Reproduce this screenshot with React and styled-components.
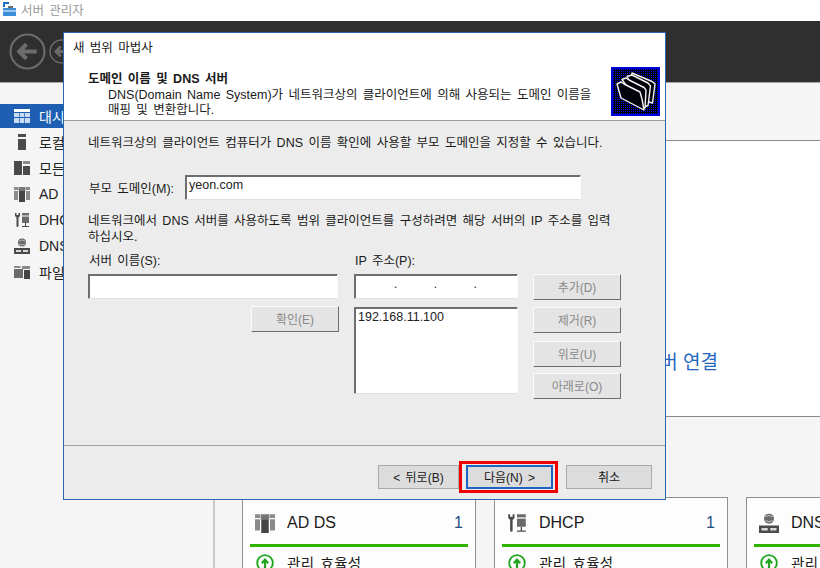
import styled, { createGlobalStyle } from 'styled-components';

const GlobalStyle = createGlobalStyle`
  html, body {
    margin: 0;
    padding: 0;
    overflow: hidden;
  }
  body {
    font-family: "Liberation Sans", "Noto Sans CJK KR", sans-serif;
    font-size: 12.5px;
    word-spacing: 1.9px;
    color: #1a1a1a;
  }
`;

const Page = styled.div`
  position: relative;
  width: 820px;
  height: 568px;
  overflow: hidden;
  background: #fff;
  display: flex;
  flex-direction: column;
`;

const TitleBar = styled.div`
  height: 21px;
  flex: none;
  box-sizing: border-box;
  display: flex;
  align-items: center;
  gap: 4px;
  padding: 0 0 3px 1px;
  color: #9a9a9a;
`;

const Toolbar = styled.div`
  height: 62px;
  flex: none;
  background: #2f2f2f;
  display: flex;
  align-items: center;
  gap: 3px;
  padding-left: 9px;
  border-bottom: 1px solid #a8a8a8;
  box-sizing: border-box;
`;

const Body = styled.div`
  flex: 1;
  display: flex;
  min-height: 0;
`;

const Sidebar = styled.nav`
  width: 213px;
  flex: none;
  background: #f5f5f5;
  border-right: 2px solid #c8c8c8;
  padding-top: 21px;
`;

const NavItem = styled.div`
  height: 24px;
  margin-bottom: 2px;
  display: flex;
  align-items: center;
  gap: 9px;
  padding-left: 14px;
  font-size: 14px;
  background: ${p => (p.$active ? '#1e5fb4' : 'transparent')};
  color: ${p => (p.$active ? '#fff' : '#222')};
`;

const Main = styled.div`
  flex: 1;
  min-width: 0;
  display: flex;
  flex-direction: column;
  background: #f5f5f5;
`;

const Banner = styled.div`
  height: 58px;
  flex: none;
  border-bottom: 1px solid #8c8c8c;
  box-sizing: border-box;
`;

const Content = styled.div`
  height: 276px;
  flex: none;
  box-sizing: border-box;
  background: #fff;
  border-bottom: 1px solid #8c8c8c;
  padding: 209px 102px 0 0;
  text-align: right;
  font-size: 19px;
  line-height: 26px;
  word-spacing: 0;
  color: #1f66c0;
`;

const CardRow = styled.div`
  flex: 1;
  display: flex;
  gap: 18px;
  padding: 80px 0 0 27px;
  overflow: hidden;
`;

const Card = styled.div`
  width: 234px;
  flex: none;
  height: 90px;
  box-sizing: border-box;
  background: #fdfdfd;
  border: 1px solid #8f8f8f;
  padding: 0 7px;
`;

const CardHead = styled.div`
  height: 43px;
  display: flex;
  align-items: center;
  gap: 12px;
  padding: 3px 5px 0;
  border-bottom: 3px solid #2db300;
  font-size: 16px;
  word-spacing: 0;
`;

const CardName = styled.span`
  flex: 1;
`;

const CardCount = styled.span`
  color: #1f4f80;
`;

const CardLine = styled.div`
  display: flex;
  align-items: center;
  gap: 13px;
  padding: 5px 0 0 6px;
  font-size: 14.5px;
  letter-spacing: 0.3px;
`;

const Dialog = styled.div`
  position: absolute;
  left: 63px;
  top: 32px;
  width: 603px;
  height: 468px;
  box-sizing: border-box;
  border: 1px solid #2a66b0;
  background: #ececec;
  display: flex;
  flex-direction: column;
`;

const DialogTitle = styled.div`
  height: 28px;
  flex: none;
  box-sizing: border-box;
  display: flex;
  align-items: center;
  padding: 0 0 2px 9px;
  background: #fff;
`;

const DialogHead = styled.div`
  height: 60px;
  flex: none;
  position: relative;
  background: #fff;
  border-bottom: 1px solid #a0a0a0;
  box-sizing: border-box;
  padding: 11px 0 0 24px;
  line-height: 15px;
`;

const HeadTitle = styled.div`
  font-weight: 700;
`;

const HeadText = styled.div`
  padding: 1px 0 0 20px;
`;

const Wizard = styled.div`
  position: absolute;
  right: 5px;
  top: 6px;
  width: 49px;
  height: 49px;
`;

const Form = styled.div`
  flex: 1;
  min-height: 0;
  padding: 14px 24px 0;
  display: flex;
  flex-direction: column;
`;

const Text = styled.div`
  line-height: 16px;
  margin-top: ${p => p.$top || 0}px;
`;

const DomainRow = styled.div`
  display: flex;
  align-items: center;
  margin-top: 24px;
`;

const DomainLabel = styled.span`
  width: 97px;
  flex: none;
  padding-left: 1px;
  box-sizing: border-box;
`;

const Field = styled.div`
  width: ${p => p.$w}px;
  height: ${p => p.$h || 25}px;
  box-sizing: border-box;
  background: #fff;
  border: 1px solid;
  border-color: #6e6e6e #fbfbfb #e0e0e0 #6e6e6e;
  box-shadow: inset 1px 1px 0 #6e6e6e;
  padding: 1px 3px;
  line-height: 16px;
  word-spacing: 0;
  color: #222;
`;

const IpField = styled(Field)`
  display: flex;
  gap: 36.4px;
  padding-left: 39px;
  font-size: 12px;
`;

const Columns = styled.div`
  display: flex;
  margin-top: 8px;
`;

const NameColumn = styled.div`
  width: 266px;
  flex: none;
  display: flex;
  flex-direction: column;
`;

const IpColumn = styled.div`
  width: 179px;
  flex: none;
  display: flex;
  flex-direction: column;
  gap: 8px;
`;

const ButtonColumn = styled.div`
  display: flex;
  flex-direction: column;
  gap: 7px;
  padding-top: 21px;
  & > :nth-child(3) {
    margin-top: 1px;
  }
  & > :nth-child(4) {
    margin-top: -1px;
  }
`;

const Label = styled.div`
  height: 21px;
  line-height: 16px;
  padding-left: 1px;
  margin-bottom: ${p => p.$below || 0}px;
`;

const Button = styled.div`
  width: 88px;
  height: 26px;
  box-sizing: border-box;
  padding-bottom: 2px;
  display: flex;
  align-items: center;
  justify-content: center;
  font-size: 12px;
  word-spacing: 0;
  background: #e4e4e4;
  color: #8a8a8a;
  border: 1px solid;
  border-color: #fafafa #6e6e6e #6e6e6e #fafafa;
`;

const ConfirmRow = styled.div`
  display: flex;
  justify-content: flex-end;
  margin: 7px 15px 0 0;
`;

const Footer = styled.div`
  height: 54px;
  flex: none;
  border-top: 1px solid #a0a0a0;
  box-sizing: border-box;
  display: flex;
  justify-content: flex-end;
  align-items: flex-start;
  gap: 7px;
  padding: 19px 13px 0 0;
`;

const WizardButton = styled.div`
  position: relative;
  width: ${p => p.$w}px;
  height: 24px;
  margin-left: ${p => p.$left || 0}px;
  box-sizing: border-box;
  padding-bottom: 2px;
  display: flex;
  align-items: center;
  justify-content: center;
  background: #dcdcdc;
  border: ${p => (p.$focus ? '2px solid #1e63c4' : '1px solid #a9a9a9')};
  color: #1a1a1a;
  font-size: 12px;
`;

// red mark somebody drew over the screenshot
const Highlight = styled.div`
  position: absolute;
  inset: -6px -7px -6px -9px;
  border: 3px solid #f00000;
`;

const ArrowButton = ({ dim }) => (
  <svg width={dim} height={dim} viewBox="0 0 36 36" fill="none" stroke="#6c6c6c">
    <circle cx="18" cy="18" r="16.5" strokeWidth="2" />
    <path d="M27 18H11M17 11l-7 7 7 7" strokeWidth="4" />
  </svg>
);

const AppIcon = () => (
  <svg width="16" height="16" viewBox="0 0 16 16">
    <path d="M2 1h6v2H4v3H2z" fill="#1c6fc0" />
    <path d="M2 7h13v8H2z" fill="#3a8fd8" />
    <path d="M7 5h5v2H7z" fill="#6d6d6d" />
    <path d="M2 10h13" stroke="#fff" />
  </svg>
);

const GridIcon = () => (
  <svg width="16" height="16" viewBox="0 0 16 16" fill="#c9dcf3">
    <path d="M0 1h16v3H0z" fill="#fff" />
    <path d="M0 5h5v4H0zM5.700 5h4.600v4H5.700zM11 5h5v4h-5zM0 10h5v5H0zM5.700 10h4.600v5H5.700zM11 10h5v5h-5z" />
  </svg>
);

const ServerIcon = () => (
  <svg width="16" height="16" viewBox="0 0 16 16" fill="#4a4a4a">
    <path d="M4 0h8v3H4zM4 5h8v11H4z" />
  </svg>
);

const AllIcon = () => (
  <svg width="16" height="16" viewBox="0 0 16 16" fill="#4a4a4a">
    <path d="M0 1h8v14H0z" />
    <path d="M9 1h7v3H9z" fill="#8a8a8a" />
    <path d="M9 6h7v9H9z" />
  </svg>
);

const AdIcon = ({ size = 16 }) => (
  <svg width={size} height={size} viewBox="0 0 16 16">
    <path d="M0 1h4v3H0zM12 1h4v3h-4zM0 5h4v9H0zM12 5h4v9h-4z" fill="#8a8a8a" />
    <path d="M4.500 1h7v4h-7z" fill="#777" />
    <path d="M5 5h6v11H5z" fill="#454545" />
  </svg>
);

const DhcpIcon = ({ size = 16 }) => (
  <svg width={size} height={size} viewBox="0 0 16 16">
    <path d="M1 1v3l1.500 1.500V14a1 1 0 0 0 2 0V5.500L6 4V1L4.500 1v2h-2V1z" fill="#4a4a4a" />
    <path d="M8 1h7v10H8z" fill="#6a6a6a" />
    <path d="M8 4h7" stroke="#fff" />
    <path d="M11 11h1v3h3v1H8v-1h3z" fill="#4a4a4a" />
  </svg>
);

const DnsIcon = ({ size = 16 }) => (
  <svg width={size} height={size} viewBox="0 0 16 16">
    <circle cx="8" cy="4.500" r="4" fill="#6a6a6a" />
    <path d="M5 3q3-2 6 0M5 6q3 2 6 0" stroke="#d0d0d0" strokeWidth=".7" fill="none" />
    <path d="M0 10h16v6H0z" fill="#4a4a4a" />
    <path d="M2 12h5v2H2zM9 12h5v2H9z" fill="#d8d8d8" />
  </svg>
);

const FileIcon = () => (
  <svg width="16" height="16" viewBox="0 0 16 16">
    <path d="M0 2h6l1 2H0z" fill="#8a8a8a" />
    <path d="M8 2h8v3H8z" fill="#8a8a8a" />
    <path d="M0 5h9v9H0z" fill="#6a6a6a" />
    <path d="M10 6h6v9h-6z" fill="#444" />
  </svg>
);

const UpIcon = () => (
  <svg width="18" height="18" viewBox="0 0 18 18" fill="none" stroke="#1fa51f">
    <circle cx="9" cy="9" r="7.800" strokeWidth="1.800" />
    <path d="M9 14V7M5.800 9.200 9 5.600l3.200 3.600" strokeWidth="2.200" />
  </svg>
);

const FoldersIcon = () => (
  <svg width="49" height="49" viewBox="0 0 49 49">
    <defs>
      <pattern id="dither" width="2" height="2" patternUnits="userSpaceOnUse">
        <rect width="2" height="2" fill="#000" />
        <rect width="1" height="1" fill="#0000ff" />
      </pattern>
    </defs>
    <rect width="49" height="49" fill="#0000d8" />
    <rect x="2" y="2" width="45" height="45" fill="url(#dither)" />
    <g fill="#02020a" stroke="#f4f4f4" strokeWidth="1.400" strokeLinejoin="round">
      <path d="M21 6 41 14.500 44 17 41.500 36 38 35 20 13z" />
      <path d="M16 9.500 21 8 37 16 39.500 19 37 38.500 33 40z" />
      <path d="M11 12.500 15 11 18 13 33 20.500 35 23 34 41 30 40z" />
      <path d="M6 17 10 15 13 17 29 25 31 32 33 43 10 31z" />
    </g>
  </svg>
);

const navItems = [
  { label: '대시', icon: <GridIcon />, active: true },
  { label: '로컬', icon: <ServerIcon /> },
  { label: '모든', icon: <AllIcon /> },
  { label: 'AD', icon: <AdIcon /> },
  { label: 'DHC', icon: <DhcpIcon /> },
  { label: 'DNS', icon: <DnsIcon /> },
  { label: '파일', icon: <FileIcon /> },
];

const cards = [
  { name: 'AD DS', icon: <AdIcon size={20} />, count: 1 },
  { name: 'DHCP', icon: <DhcpIcon size={20} />, count: 1 },
  { name: 'DNS', icon: <DnsIcon size={20} />, count: 1 },
];

const App = () => (
  <Page>
    <GlobalStyle />
    <TitleBar>
      <AppIcon />
      서버 관리자
    </TitleBar>
    <Toolbar>
      <ArrowButton dim={37} />
      <ArrowButton dim={25} />
    </Toolbar>
    <Body>
      <Sidebar>
        {navItems.map(item => (
          <NavItem key={item.label} $active={item.active}>
            {item.icon}
            {item.label}
          </NavItem>
        ))}
      </Sidebar>
      <Main>
        <Banner />
        <Content>버 연결</Content>
        <CardRow>
          {cards.map(card => (
            <Card key={card.name}>
              <CardHead>
                {card.icon}
                <CardName>{card.name}</CardName>
                <CardCount>{card.count}</CardCount>
              </CardHead>
              <CardLine>
                <UpIcon />
                관리 효율성
              </CardLine>
            </Card>
          ))}
        </CardRow>
      </Main>
    </Body>
    <Dialog>
      <DialogTitle>새 범위 마법사</DialogTitle>
      <DialogHead>
        <HeadTitle>도메인 이름 및 DNS 서버</HeadTitle>
        <HeadText>
          DNS(Domain Name System)가 네트워크상의 클라이언트에 의해 사용되는 도메인 이름을
          <br />
          매핑 및 변환합니다.
        </HeadText>
        <Wizard>
          <FoldersIcon />
        </Wizard>
      </DialogHead>
      <Form>
        <Text>네트워크상의 클라이언트 컴퓨터가 DNS 이름 확인에 사용할 부모 도메인을 지정할 수 있습니다.</Text>
        <DomainRow>
          <DomainLabel>부모 도메인(M):</DomainLabel>
          <Field $w={396}>yeon.com</Field>
        </DomainRow>
        <Text $top={13}>
          네트워크에서 DNS 서버를 사용하도록 범위 클라이언트를 구성하려면 해당 서버의 IP 주소를 입력
          <br />
          하십시오.
        </Text>
        <Columns>
          <NameColumn>
            <Label>서버 이름(S):</Label>
            <Field $w={250} />
            <ConfirmRow>
              <Button>확인(E)</Button>
            </ConfirmRow>
          </NameColumn>
          <IpColumn>
            <Label $below={-8}>IP 주소(P):</Label>
            <IpField $w={164}>
              <span>.</span>
              <span>.</span>
              <span>.</span>
            </IpField>
            <Field $w={164} $h={87}>192.168.11.100</Field>
          </IpColumn>
          <ButtonColumn>
            <Button>추가(D)</Button>
            <Button>제거(R)</Button>
            <Button>위로(U)</Button>
            <Button>아래로(O)</Button>
          </ButtonColumn>
        </Columns>
      </Form>
      <Footer>
        <WizardButton $w={81}>&lt; 뒤로(B)</WizardButton>
        <WizardButton $w={87} $focus>
          다음(N) &gt;
          <Highlight />
        </WizardButton>
        <WizardButton $w={86} $left={6}>취소</WizardButton>
      </Footer>
    </Dialog>
  </Page>
);

export default App;
